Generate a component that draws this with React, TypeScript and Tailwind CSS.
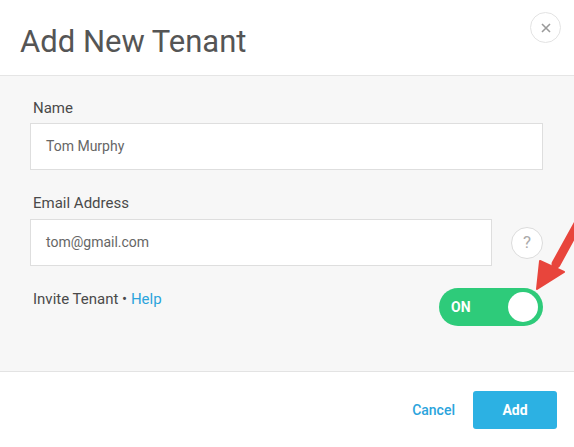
import React from "react";

export default function App() {
  return (
    <div className="relative w-[574px] h-[447px] bg-white overflow-hidden" style={{ fontFamily: "Roboto, 'Liberation Sans', sans-serif" }}>
      <div className="h-[76px] flex items-start justify-between border-b border-[#e5e5e5]">
        <h1 className="pl-[20px] pt-[22px] text-[31px] leading-[40px] text-[#555]">Add New Tenant</h1>
        <div className="mt-[12px] mr-[13px] w-[31px] h-[31px] rounded-full border border-[#e3e3e3] flex items-center justify-center text-[#9a9a9a]">
          <svg width="10" height="10" viewBox="0 0 10 10"><path d="M1 1L9 9M9 1L1 9" stroke="currentColor" strokeWidth="1.6" /></svg>
        </div>
      </div>
      <div className="h-[296px] bg-[#f7f7f7] border-b border-[#e3e3e3] pl-[30px] pr-[31px] pt-[22px]">
        <div className="pl-[3px] text-[15px] leading-[20px] text-[#4a4a4a]">Name</div>
        <div className="mt-[5px] h-[47px] bg-white border border-[#dedede] flex items-center pl-[15px] text-[14px] text-[#666]">Tom Murphy</div>
        <div className="mt-[23px] pl-[3px] text-[15px] leading-[20px] text-[#4a4a4a]">Email Address</div>
        <div className="mt-[6px] flex items-center">
          <div className="w-[462px] h-[47px] bg-white border border-[#dedede] flex items-center pl-[15px] text-[14px] text-[#666]">tom@gmail.com</div>
          <div className="ml-[19px] w-[32px] h-[32px] rounded-full border border-[#dcdcdc] bg-white flex items-center justify-center text-[17px] text-[#aaa]">?</div>
        </div>
        <div className="mt-[22px] flex items-start justify-between">
          <div className="pl-[3px] pt-[1px] text-[15px] leading-[20px] text-[#4a4a4a]">
            Invite Tenant • <span className="text-[#2ba4dc]">Help</span>
          </div>
          <div className="w-[104px] h-[38px] rounded-full bg-[#2ecb7a] flex items-center justify-between pl-[12px] pr-[5px]">
            <span className="text-white font-bold text-[14px]">ON</span>
            <div className="w-[30px] h-[30px] rounded-full bg-white"></div>
          </div>
        </div>
      </div>
      <div className="flex items-center justify-end pr-[17px] pt-[19px]">
        <span className="text-[14px] font-medium text-[#2ba4dc] mr-[18px]">Cancel</span>
        <div className="w-[84px] h-[38px] rounded-[3px] bg-[#2cb1e3] text-white font-bold text-[14px] flex items-center justify-center">Add</div>
      </div>
      <svg className="absolute left-0 top-0 pointer-events-none" width="574" height="447" viewBox="0 0 574 447">
        <path d="M578 224 L556 264" stroke="#e8453c" strokeWidth="9" strokeLinecap="round" />
        <path d="M537 289 L540 261 L564 272 Z" fill="#e8453c" stroke="#e8453c" strokeWidth="2" strokeLinejoin="round" />
      </svg>
    </div>
  );
}
